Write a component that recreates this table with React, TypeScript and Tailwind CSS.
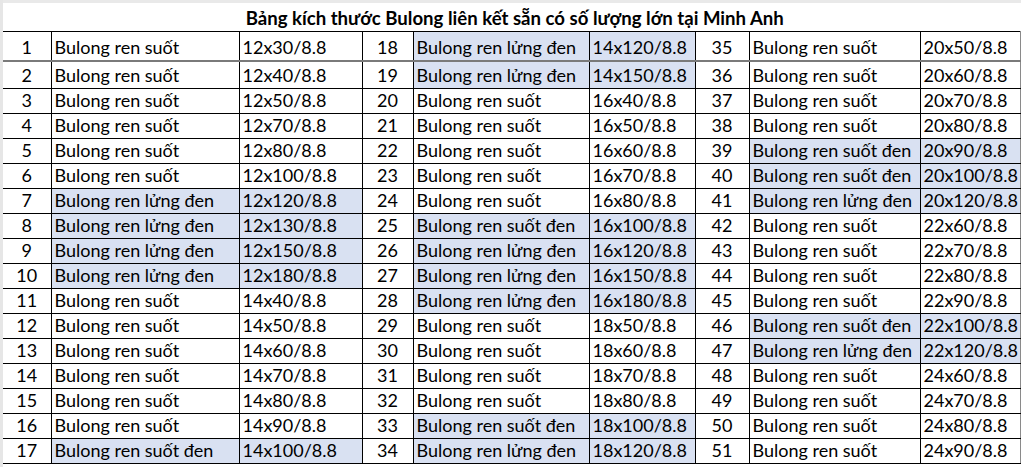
import React from "react";

type Row = [number, string, string, boolean];

const SUOT = "Bulong ren suốt";
const SUOT_DEN = "Bulong ren suốt đen";
const LUNG_DEN = "Bulong ren lửng đen";

const set1: Row[] = [
  [1, SUOT, "12x30/8.8", false],
  [2, SUOT, "12x40/8.8", false],
  [3, SUOT, "12x50/8.8", false],
  [4, SUOT, "12x70/8.8", false],
  [5, SUOT, "12x80/8.8", false],
  [6, SUOT, "12x100/8.8", false],
  [7, LUNG_DEN, "12x120/8.8", true],
  [8, LUNG_DEN, "12x130/8.8", true],
  [9, LUNG_DEN, "12x150/8.8", true],
  [10, LUNG_DEN, "12x180/8.8", true],
  [11, SUOT, "14x40/8.8", false],
  [12, SUOT, "14x50/8.8", false],
  [13, SUOT, "14x60/8.8", false],
  [14, SUOT, "14x70/8.8", false],
  [15, SUOT, "14x80/8.8", false],
  [16, SUOT, "14x90/8.8", false],
  [17, SUOT_DEN, "14x100/8.8", true],
];
const set2: Row[] = [
  [18, LUNG_DEN, "14x120/8.8", true],
  [19, LUNG_DEN, "14x150/8.8", true],
  [20, SUOT, "16x40/8.8", false],
  [21, SUOT, "16x50/8.8", false],
  [22, SUOT, "16x60/8.8", false],
  [23, SUOT, "16x70/8.8", false],
  [24, SUOT, "16x80/8.8", false],
  [25, SUOT_DEN, "16x100/8.8", true],
  [26, LUNG_DEN, "16x120/8.8", true],
  [27, LUNG_DEN, "16x150/8.8", true],
  [28, LUNG_DEN, "16x180/8.8", true],
  [29, SUOT, "18x50/8.8", false],
  [30, SUOT, "18x60/8.8", false],
  [31, SUOT, "18x70/8.8", false],
  [32, SUOT, "18x80/8.8", false],
  [33, SUOT_DEN, "18x100/8.8", true],
  [34, LUNG_DEN, "18x120/8.8", true],
];
const set3: Row[] = [
  [35, SUOT, "20x50/8.8", false],
  [36, SUOT, "20x60/8.8", false],
  [37, SUOT, "20x70/8.8", false],
  [38, SUOT, "20x80/8.8", false],
  [39, SUOT_DEN, "20x90/8.8", true],
  [40, SUOT_DEN, "20x100/8.8", true],
  [41, LUNG_DEN, "20x120/8.8", true],
  [42, SUOT, "22x60/8.8", false],
  [43, SUOT, "22x70/8.8", false],
  [44, SUOT, "22x80/8.8", false],
  [45, SUOT, "22x90/8.8", false],
  [46, SUOT_DEN, "22x100/8.8", true],
  [47, LUNG_DEN, "22x120/8.8", true],
  [48, SUOT, "24x60/8.8", false],
  [49, SUOT, "24x70/8.8", false],
  [50, SUOT, "24x80/8.8", false],
  [51, SUOT, "24x90/8.8", false],
];

const widths = [48, 188, 123, 51, 176, 106, 54, 171, 100];

function rowHeight(i: number) {
  if (i === 0) return "h-[29px]";
  if (i === 1) return "h-[28px]";
  return "h-[25px]";
}

export default function App() {
  return (
    <div
      className="w-[1024px] h-[467px] bg-white overflow-hidden text-black"
      style={{ fontFamily: "Lato, 'Open Sans', sans-serif" }}
    >
      <div className="flex">
        <div className="w-[3px] shrink-0 h-[467px] bg-[#e6e6e6]" />
        <div className="flex flex-col">
          <div className="h-[3px] bg-[#e9e9e9]" />
          <div className="h-[28px] flex items-end justify-center pb-[3px] pl-[6px]">
            <span className="text-[18.6px] font-bold leading-none">
              Bảng kích thước Bulong liên kết sẵn có số lượng lớn tại Minh Anh
            </span>
          </div>
          <table className="border-collapse table-fixed text-[18px] leading-none">
            <colgroup>
              {widths.map((w, i) => (
                <col key={i} style={{ width: w }} />
              ))}
            </colgroup>
            <tbody>
              {set1.map((r1, i) => {
                const r2 = set2[i];
                const r3 = set3[i];
                const hb =
                  i === 0
                    ? "border-b-2 border-b-[#7a7a7a]"
                    : "border-b border-b-black";
                const cell = `border-x border-x-black ${hb} border-t border-t-black align-bottom pb-[4px] whitespace-nowrap`;
                const bg = (h: boolean) => (h ? "bg-[#d9e1f2]" : "");
                return (
                  <tr key={i} className={rowHeight(i)}>
                    <td className={`${cell} text-center border-l-0`}>{r1[0]}</td>
                    <td className={`${cell} pl-[3px] ${bg(r1[3])}`}>{r1[1]}</td>
                    <td className={`${cell} pl-[3px] ${bg(r1[3])}`}>{r1[2]}</td>
                    <td className={`${cell} text-center`}>{r2[0]}</td>
                    <td className={`${cell} pl-[3px] ${bg(r2[3])}`}>{r2[1]}</td>
                    <td className={`${cell} pl-[3px] ${bg(r2[3])}`}>{r2[2]}</td>
                    <td className={`${cell} text-center`}>{r3[0]}</td>
                    <td className={`${cell} pl-[3px] ${bg(r3[3])}`}>{r3[1]}</td>
                    <td className={`${cell} pl-[3px] ${bg(r3[3])} border-r-[#8a8a8a]`}>{r3[2]}</td>
                  </tr>
                );
              })}
            </tbody>
          </table>
        </div>
      </div>
    </div>
  );
}
